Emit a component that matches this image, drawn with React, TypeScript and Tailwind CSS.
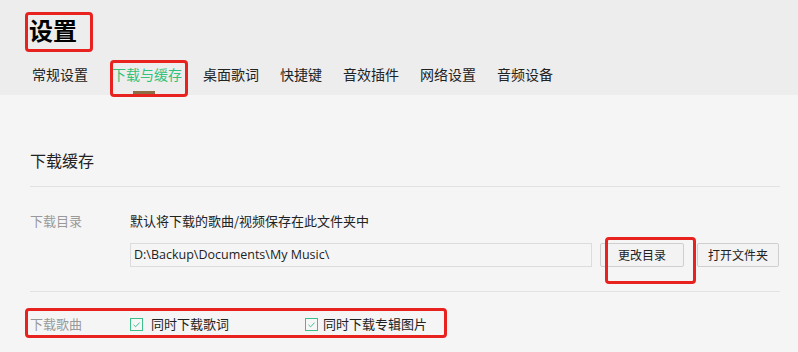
import React from 'react';

const tabs = ['常规设置', '下载与缓存', '桌面歌词', '快捷键', '音效插件', '网络设置', '音频设备'];

function CheckBox() {
  return (
    <svg width="13" height="13" viewBox="0 0 13 13" className="shrink-0">
      <rect x="0.5" y="0.5" width="12" height="12" fill="#f7f7f7" stroke="#3dbf8b" />
      <polyline points="3.5,6.8 5.6,8.8 9.6,4.6" fill="none" stroke="#3dbf8b" strokeWidth="1" />
    </svg>
  );
}

function Mark({ className }: { className: string }) {
  return <div className={`absolute border-[3px] border-[#e8231f] rounded-[4px] pointer-events-none ${className}`} />;
}

export default function App() {
  return (
    <div className="relative w-[798px] h-[352px] overflow-hidden bg-[#f5f5f5] text-[#333] font-['Microsoft_YaHei','Noto_Sans_CJK_SC',sans-serif]">
      <header className="h-[95px] bg-[#ededed] pl-[29px] pt-[14px]">
        <h1 className="text-[24px] leading-[32px] font-bold text-black">设置</h1>
        <nav className="mt-[18px] flex gap-[21px] text-[14px] leading-[20px]">
          {tabs.map((t, i) => (
            <div
              key={t}
              className={`relative ${i === 0 ? 'ml-[3px] mr-[3px]' : ''} ${i === 1 ? 'text-[#31c27c]' : 'text-[#222]'}`}
            >
              {t}
              {i === 1 && <span className="absolute left-[21px] top-[27px] h-[3px] w-[22px] bg-[#8c6d45]" />}
            </div>
          ))}
        </nav>
      </header>

      <main className="pl-[30px] pr-[18px]">
        <h2 className="pt-[53px] text-[16px] leading-[24px] text-[#222]">下载缓存</h2>
        <div className="mt-[14px] border-t border-[#e2e2e2]" />

        <div className="mt-[24px] flex text-[13px] leading-[20px]">
          <div className="w-[100px] text-[#999]">下载目录</div>
          <div className="flex-1">
            <div className="text-[#222]">默认将下载的歌曲/视频保存在此文件夹中</div>
            <div className="mt-[12px] flex items-center">
              <div className="h-[24px] w-[462px] border border-[#dcdcdc] bg-[#f5f5f5] pl-[3px] flex items-center font-['Open_Sans',sans-serif] text-[12.5px] text-[#222]">
                D:\Backup\Documents\My Music\
              </div>
              <button className="ml-[8px] h-[24px] w-[84px] rounded-[2px] border border-[#cfcfcf] bg-[#f3f3f3] text-[12px] text-[#222]">
                更改目录
              </button>
              <button className="ml-[13px] h-[24px] w-[82px] rounded-[2px] border border-[#cfcfcf] bg-[#f3f3f3] text-[12px] text-[#222]">
                打开文件夹
              </button>
            </div>
          </div>
        </div>

        <div className="mt-[24px] border-t border-[#e2e2e2]" />

        <div className="mt-[22px] flex items-center text-[13px] leading-[20px]">
          <div className="w-[100px] text-[#999]">下载歌曲</div>
          <label className="flex w-[175px] items-center gap-[8px] text-[#222]">
            <CheckBox />
            同时下载歌词
          </label>
          <label className="flex items-center gap-[5px] text-[#222]">
            <CheckBox />
            同时下载专辑图片
          </label>
        </div>
      </main>

      <Mark className="left-[25px] top-[12px] w-[68px] h-[40px]" />
      <Mark className="left-[110px] top-[60px] w-[78px] h-[37px]" />
      <Mark className="left-[605px] top-[237px] w-[91px] h-[47px]" />
      <Mark className="left-[25px] top-[308px] w-[422px] h-[30px]" />
    </div>
  );
}
